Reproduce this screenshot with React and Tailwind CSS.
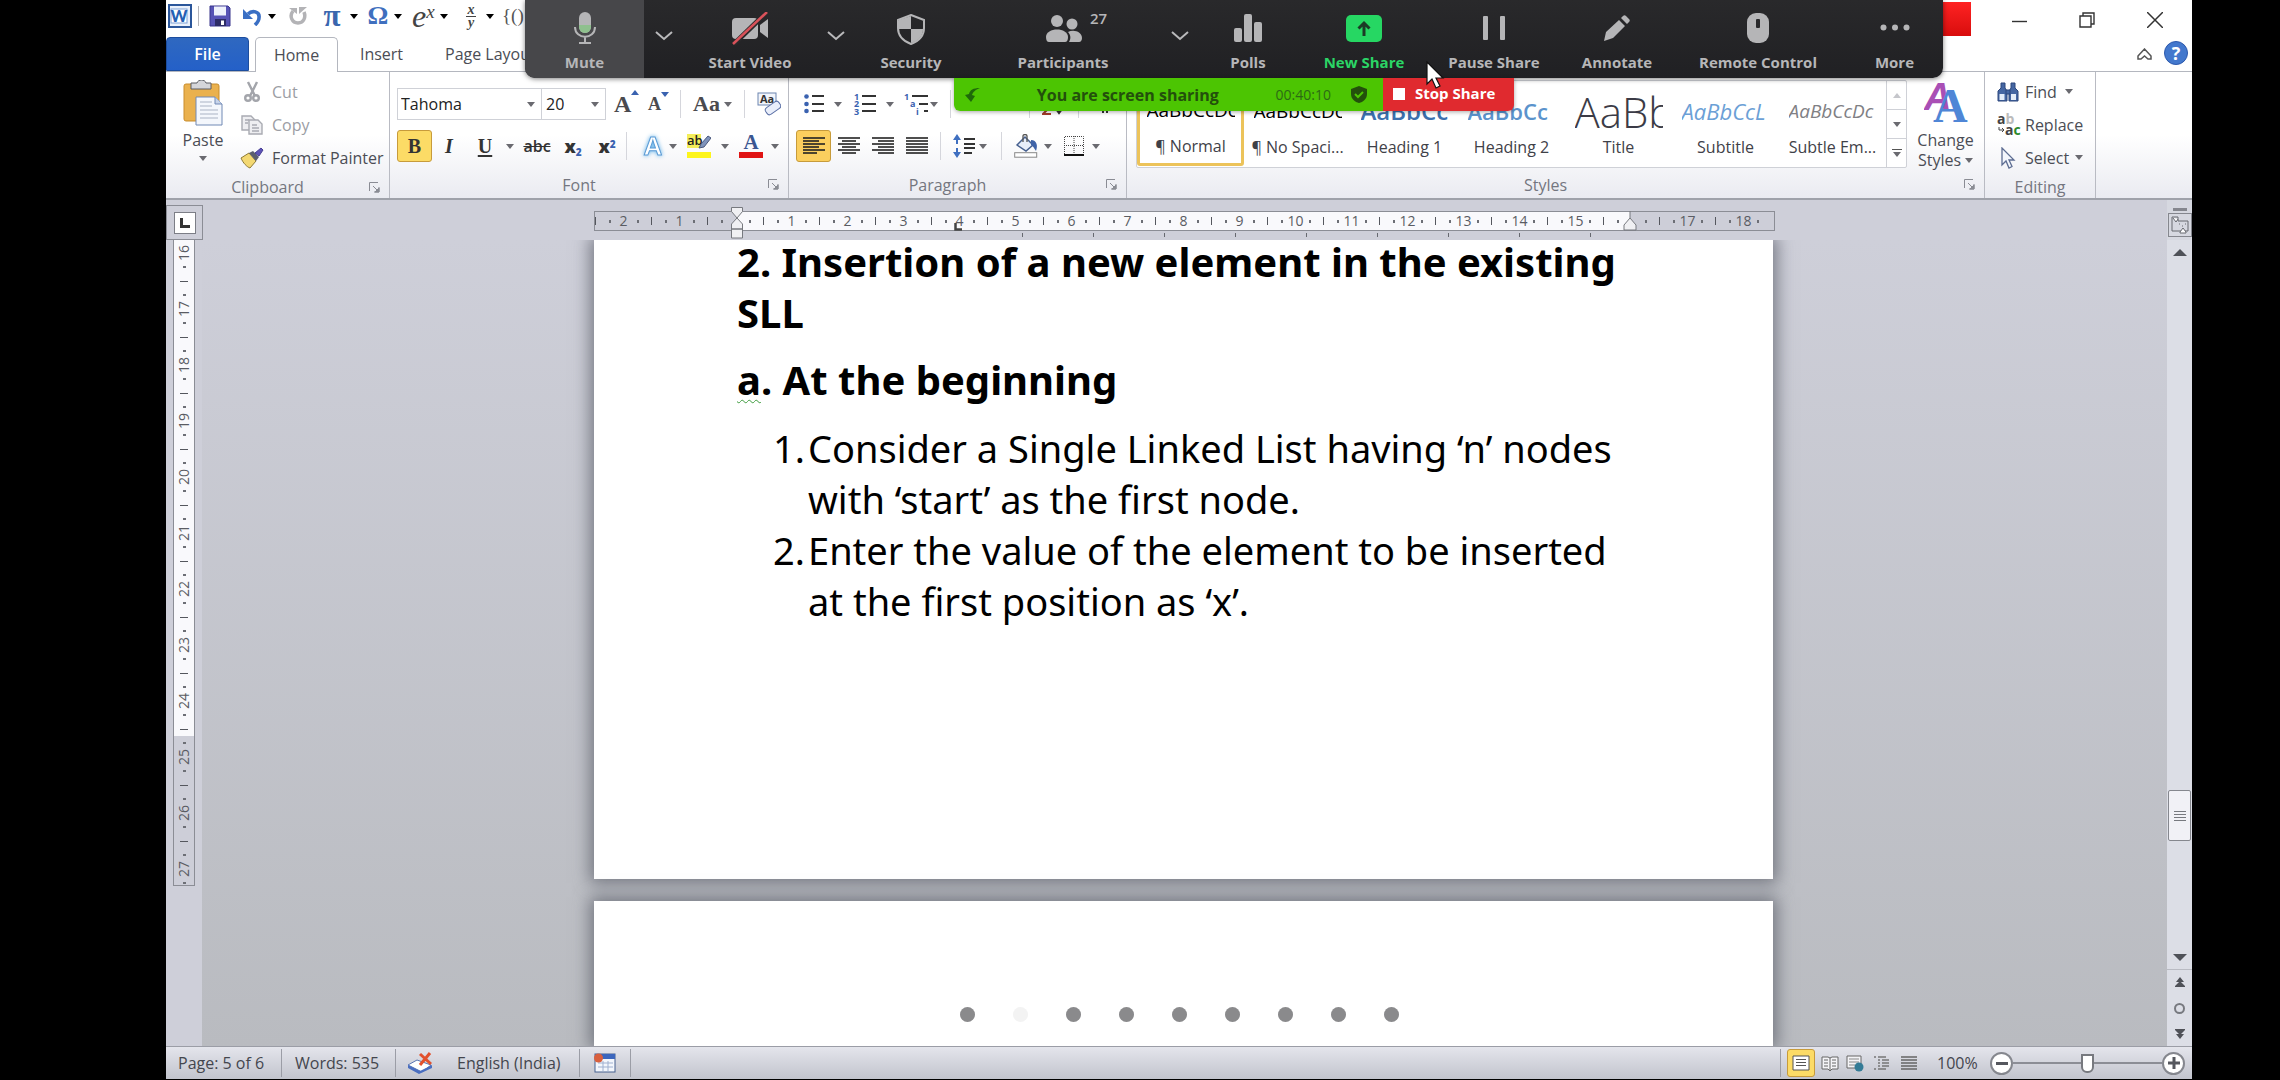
import React, { useState } from 'react';

const H_MARKS = ['2', '1', '', '1', '2', '3', '4', '5', '6', '7', '8', '9', '10', '11', '12', '13', '14', '15', '', '17', '18'];
const V_MARKS = ['16', '17', '18', '19', '20', '21', '22', '23', '24', '25', '26', '27'];

const STYLES = [
  { name: '¶ Normal', sample: 'AaBbCcDc', look: 'text-[19px] text-black' },
  { name: '¶ No Spaci...', sample: 'AaBbCcDc', look: 'text-[19px] text-black' },
  { name: 'Heading 1', sample: 'AaBbCc', look: 'text-[24px] font-semibold text-[#3c70ae]' },
  { name: 'Heading 2', sample: 'AaBbCc', look: 'text-[22px] font-semibold text-[#5b93cc]' },
  { name: 'Title', sample: 'AaBb', look: 'text-[42px] font-light text-[#3b3b46]' },
  { name: 'Subtitle', sample: 'AaBbCcL', look: 'text-[22px] italic text-[#6ba0d6]' },
  { name: 'Subtle Em...', sample: 'AaBbCcDc', look: 'text-[19px] italic text-[#808084]' },
];

function Caret({ className = 'text-[#6a6a70]' }) {
  return (
    <svg className={`w-2 h-[5px] shrink-0 ${className}`} viewBox="0 0 8 5" fill="currentColor">
      <path d="M0 0h8L4 5z" />
    </svg>
  );
}

function Sep() {
  return <div className="w-px h-7 shrink-0 bg-[#d5d6dc]"></div>;
}

// Ribbon group with its caption and optional dialog launcher
function Group({ title, launcher = true, className, children }) {
  return (
    <section className={`flex flex-col shrink-0 border-r border-[#b9bbc3] ${className}`}>
      <div className="flex-1">{children}</div>
      <div className="h-[25px] pb-0.5 flex items-center text-[16px] leading-5 text-[#74767f]">
        <span className="flex-1 text-center">{title}</span>
        {launcher && (
          <button aria-label={`${title} settings`} className="w-5">
            <svg className="w-[11px] h-[11px]" viewBox="0 0 11 11" fill="none" stroke="#8a8c94">
              <path d="M.5 9V.5H9M4 4l5 5M10 5v5H5" />
              <path d="M10 6v4H6z" fill="#8a8c94" />
            </svg>
          </button>
        )}
      </div>
    </section>
  );
}

function Lines({ rows, className = '' }) {
  return (
    <svg className={`w-[22px] h-[18px] ${className}`} viewBox="0 0 22 18" stroke="#222" strokeWidth="2">
      {rows.map(([a, b], i) => <path key={i} d={`M${a} ${1 + i * 3}H${b}`} strokeWidth="1.6" />)}
    </svg>
  );
}

function QuickAccess() {
  return (
    <div className="h-9 flex items-center pl-0.5 pb-1">
      <svg className="w-6 h-6" viewBox="0 0 24 24">
        <rect x="1" y="1" width="22" height="22" fill="#e9f0fb" stroke="#2b569a" strokeWidth="2" />
        <rect x="3" y="5" width="16" height="14" fill="#fff" stroke="#7ea2d8" />
        <text x="11" y="18" textAnchor="middle" fontSize="16" fontWeight="900" fill="#2460b4" fontFamily="Lato">W</text>
      </svg>
      <div className="w-px h-5 bg-[#b5b5ba] ml-1.5 mr-2.5"></div>
      <button aria-label="Save">
        <svg className="w-[22px] h-[22px]" viewBox="0 0 22 22">
          <path d="M1 1h18l2 2v18H1z" fill="#5753b5" stroke="#38358b" />
          <rect x="5" y="1.500" width="12" height="9" fill="#eef1fb" />
          <rect x="6" y="14" width="11" height="7" fill="#2d2c66" />
          <rect x="12" y="15.500" width="3" height="4.500" fill="#fff" />
        </svg>
      </button>
      <button aria-label="Undo" className="ml-3">
        <svg className="w-[19px] h-[19px]" viewBox="0 0 19 19">
          <path d="M5 7c4-4 12-3 11 4 0 3-2 5-4 7" fill="none" stroke="#3a6fc4" strokeWidth="3.600" />
          <path d="M0 2v10h10z" fill="#3a6fc4" />
        </svg>
      </button>
      <Caret className="ml-1.5 text-black" />
      <button aria-label="Repeat" className="ml-3">
        <svg className="w-5 h-5" viewBox="0 0 20 20">
          <path d="M5 5c-4 5-1 12 5 12s8-6 6-11" fill="none" stroke="#b3b3b6" strokeWidth="3.500" />
          <path d="M11 8V1h8zM1 2h8v6z" fill="#b3b3b6" />
        </svg>
      </button>
      <button aria-label="Pi" className="ml-3 w-6 text-center text-[31px] leading-6 font-bold text-[#3a66ae] font-['Liberation_Serif',serif]">π</button>
      <Caret className="ml-1.5 text-black" />
      <button aria-label="Symbol" className="ml-2 w-6 text-center text-[26px] leading-6 font-bold text-[#3f6fbe] font-['Liberation_Serif',serif]">Ω</button>
      <Caret className="ml-1 text-black" />
      <button aria-label="Script" className="ml-2.5 w-7 text-left text-[32px] leading-6 italic text-[#444] whitespace-nowrap font-['Liberation_Serif',serif]">
        e<sup className="text-[19px]">x</sup>
      </button>
      <Caret className="text-black" />
      <button aria-label="Fraction" className="ml-[18px] w-2.5 text-[14px] leading-[11px] font-bold italic text-[#444] font-['Liberation_Serif',serif]">
        <span className="block border-b border-[#444] pb-px">x</span>
        <span className="block">y</span>
      </button>
      <Caret className="ml-2.5 text-black" />
      <button aria-label="Brackets" className="ml-2 text-[19px] text-[#555] font-['Liberation_Serif',serif]">{'{()}'}</button>

      <div className="ml-auto flex items-center self-stretch">
        <div className="w-8 h-[34px] self-start mt-0.5 mr-[41px] bg-linear-to-b from-[#ff2222] to-[#d80c0c]"></div>
        <button aria-label="Minimize" className="w-4 h-5 mt-2 mr-[51px]">
          <svg className="w-4 h-4" viewBox="0 0 16 16" stroke="#333"><path d="M0 9.500h15" strokeWidth="1.400" /></svg>
        </button>
        <button aria-label="Restore" className="w-4 mt-2 mr-[52px]">
          <svg className="w-4 h-4" viewBox="0 0 16 16" fill="none" stroke="#333" strokeWidth="1.400"><path d="M1 4h11v11H1zM4 4V1h11v11h-3" /></svg>
        </button>
        <button aria-label="Close" className="w-4 mt-2 mr-[29px]">
          <svg className="w-4 h-4" viewBox="0 0 16 16" stroke="#333" strokeWidth="1.500"><path d="M0 0l16 16M16 0L0 16" /></svg>
        </button>
      </div>
    </div>
  );
}

function Tabs() {
  return (
    <nav className="h-9 flex items-end border-b border-[#b4b7bf] text-[16px] text-[#4b4d55]">
      <button className="w-[83px] h-[34px] mr-1.5 rounded-t bg-linear-to-b from-[#2f68c0] to-[#2460c8] border border-[#1c4d9e] font-semibold text-white">File</button>
      <button className="w-[83px] h-[35px] -mb-px rounded-t-[5px] border border-b-0 border-[#b4b7bf] bg-white">Home</button>
      <button className="w-[87px] h-[34px]">Insert</button>
      <button className="h-[34px] pl-5">Page Layout</button>
      <button aria-label="Minimize the ribbon" className="ml-auto mb-2.5 mr-3">
        <svg className="w-[15px] h-[13px]" viewBox="0 0 15 13" fill="none" stroke="#555" strokeWidth="1.500">
          <path d="M1 8l6.500-7L14 8v3h-3L7.500 8 4 11H1z" />
        </svg>
      </button>
      <button aria-label="Help" className="w-6 h-6 mb-1.5 mr-1 rounded-full border border-[#2d59ad] bg-[#4378cd] text-[18px] leading-5 font-bold text-white">?</button>
    </nav>
  );
}

function ClipboardGroup() {
  return (
    <Group title="Clipboard" className="w-[224px]">
      <div className="flex pt-1.5">
        <button className="w-[74px] flex flex-col items-center pt-0.5 text-[16px] leading-5 text-[#4b4d55]">
          <svg className="w-10 h-[46px] mb-1" viewBox="0 0 40 46">
            <rect x="1" y="4" width="35" height="37" rx="2" fill="#eab14e" stroke="#c98d2c" />
            <path d="M8 3h6c1-4 8-4 9 0h5v6H8z" fill="#d5d6da" stroke="#5a5c63" />
            <path d="M13 17h19l7 7v21H13z" fill="#f4f7fc" stroke="#7089b5" />
            <path d="M32 17v7h7" fill="#c7d4ea" stroke="#7089b5" />
            <path d="M17 22h12M17 26h12M17 30h18M17 34h18M17 38h18" stroke="#aab3c4" />
          </svg>
          Paste
          <Caret className="mt-1.5 text-[#6a6a70]" />
        </button>
        <div className="flex flex-col text-[16px] text-[#4b4d55] whitespace-nowrap">
          <button className="h-[33px] pb-1.5 flex items-center gap-2 text-[#9b9da4]">
            <svg className="w-6 h-[22px]" viewBox="0 0 24 22" fill="none" stroke="#a3a5ab" strokeWidth="2.400">
              <path d="M8 1l7 14M17 1l-7 14" />
              <circle cx="8" cy="17" r="2.800" /><circle cx="16" cy="17" r="2.800" />
            </svg>
            Cut
          </button>
          <button className="h-[33px] pb-1.5 flex items-center gap-2 text-[#9b9da4]">
            <svg className="w-6 h-[22px]" viewBox="0 0 24 22" fill="#eeeeF1" stroke="#a9abb2" strokeWidth="1.400">
              <path d="M2 2h9l4 4v10H2z" /><path d="M9 6h9l4 4v10H9z" />
              <path d="M5 6h4M5 9h3M12 11h5M12 14h7M12 17h7" />
            </svg>
            Copy
          </button>
          <button className="h-[33px] pb-1.5 flex items-center gap-2">
            <svg className="w-6 h-[22px]" viewBox="0 0 24 22">
              <path d="M1 11l8-5 7 8-6 7c-3-1-7-5-9-10z" fill="#f3d872" stroke="#8d7a35" />
              <path d="M9 6l4-2 6 6-3 4z" fill="#5b5e70" />
              <path d="M15 6l6-5 2 2-4 6z" fill="#5d53b7" stroke="#463d93" />
            </svg>
            Format Painter
          </button>
        </div>
      </div>
    </Group>
  );
}

function FontGroup() {
  const [bold, setBold] = useState(true);
  return (
    <Group title="Font" className="w-[399px]">
      <div className="h-8 mt-4 pl-[7px] flex items-center text-[16px] text-[#222]">
        <div className="w-[145px] h-8 flex items-center border border-[#cfd1d7] bg-white pl-[3px] pr-1.5">
          <select aria-label="Font" className="flex-1 appearance-none outline-none"><option>Tahoma</option></select>
          <Caret />
        </div>
        <div className="w-[65px] h-8 -ml-px flex items-center border border-[#cfd1d7] bg-white pl-1 pr-1.5">
          <select aria-label="Font size" className="flex-1 appearance-none outline-none"><option>20</option></select>
          <Caret />
        </div>
        <button aria-label="Grow font" className="w-7 ml-2 flex items-start">
          <span className="text-[24px] leading-7 font-bold text-[#4a4a4e] font-['Liberation_Serif',serif]">A</span>
          <svg className="w-2 h-2" viewBox="0 0 8 8" fill="#3a62b0"><path d="M0 5l4-5 4 5z" /></svg>
        </button>
        <button aria-label="Shrink font" className="w-6 ml-1.5 flex items-start">
          <span className="text-[18px] leading-8 font-bold text-[#4a4a4e] font-['Liberation_Serif',serif]">A</span>
          <svg className="w-2 h-2 mt-1" viewBox="0 0 8 8" fill="#3a62b0"><path d="M0 0h8L4 5z" /></svg>
        </button>
        <div className="w-2"></div>
        <Sep />
        <button aria-label="Change case" className="ml-3 flex items-center gap-1 text-[22px] leading-7 font-bold text-[#4a4a4e] font-['Liberation_Serif',serif]">Aa<Caret /></button>
        <div className="w-3"></div>
        <Sep />
        <button aria-label="Clear formatting" className="ml-3">
          <svg className="w-6 h-6" viewBox="0 0 24 24">
            <rect x="1" y="1" width="18" height="12" fill="#f2f5fb" stroke="#6d85b0" />
            <text x="10" y="11" textAnchor="middle" fontSize="11" fontWeight="700" fill="#333">Aa</text>
            <rect x="8" y="12" width="16" height="8" rx="3" fill="#e9eefa" stroke="#5a6fa5" transform="rotate(-35 16 16)" />
          </svg>
        </button>
      </div>
      <div className="h-8 mt-2.5 pl-[7px] flex items-center text-[#333]">
        <button
          aria-pressed={bold}
          onClick={() => setBold(!bold)}
          className={`w-[35px] h-8 rounded-[3px] text-[20px] font-bold font-['Liberation_Serif',serif] ${bold ? 'border border-[#c79b3b] bg-[#fcdb66]' : ''}`}
        >
          B
        </button>
        <button className="w-[34px] text-[20px] font-bold italic font-['Liberation_Serif',serif]">I</button>
        <button className="w-[38px] text-[20px] font-bold underline underline-offset-2 font-['Liberation_Serif',serif]">U</button>
        <Caret className="mx-0.5 text-[#6a6a70]" />
        <button className="w-[42px] text-[16px] font-semibold line-through">abc</button>
        <button className="w-[30px] text-[18px] font-extrabold leading-6">x<sub className="text-[10px] text-[#3a62b0]">2</sub></button>
        <button className="w-[38px] text-[18px] font-extrabold leading-6">x<sup className="text-[10px] text-[#3a62b0]">2</sup></button>
        <Sep />
        <button aria-label="Text effects" className="w-6 ml-3.5 text-[26px] leading-7 font-bold text-white font-['Liberation_Sans',sans-serif] [-webkit-text-stroke:1px_#5b9bd5] drop-shadow-[0_0_2px_#5fb0e8]">A</button>
        <Caret className="ml-1 text-[#6a6a70]" />
        <button aria-label="Highlight" className="ml-2.5">
          <svg className="w-6 h-[26px]" viewBox="0 0 24 26">
            <rect x="0" y="1" width="14" height="14" fill="#f4ee5a" />
            <text x="0" y="12" fontSize="13" fontWeight="600" fill="#222">ab</text>
            <path d="M12 15l2-4 7-8 3 2-7 9z" fill="#7f93bb" stroke="#49587c" />
            <rect x="0" y="19" width="24" height="6" fill="#fdf51c" />
          </svg>
        </button>
        <Caret className="ml-2.5 text-[#6a6a70]" />
        <button aria-label="Font color" className="ml-2.5">
          <svg className="w-6 h-[26px]" viewBox="0 0 24 26">
            <text x="12" y="16" textAnchor="middle" fontSize="21" fontWeight="700" fill="#3b5691" fontFamily="Liberation Serif">A</text>
            <rect x="0" y="19" width="24" height="6" fill="#e01414" />
          </svg>
        </button>
        <Caret className="ml-2 text-[#6a6a70]" />
      </div>
    </Group>
  );
}

function ParagraphGroup() {
  return (
    <Group title="Paragraph" className="w-[338px]">
      <div className="h-8 mt-4 pl-[15px] flex items-center">
        <button aria-label="Bullets">
          <svg className="w-5 h-5" viewBox="0 0 20 20" stroke="#333" strokeWidth="2">
            <path d="M8 2h12M8 10h12M8 17h12" />
            <g fill="#3a62b0" stroke="none"><circle cx="2.500" cy="2.500" r="2.300" /><circle cx="2.500" cy="10" r="2.300" /><circle cx="2.500" cy="17" r="2.300" /></g>
          </svg>
        </button>
        <Caret className="ml-2.5 text-[#6a6a70]" />
        <button aria-label="Numbering" className="ml-3">
          <svg className="w-[22px] h-[22px]" viewBox="0 0 22 22" stroke="#333" strokeWidth="2">
            <path d="M8 3h14M8 11h14M8 18h14" />
            <g fill="#3a62b0" stroke="none" fontSize="9" fontWeight="700"><text x="0" y="7">1</text><text x="0" y="14">2</text><text x="0" y="22">3</text></g>
          </svg>
        </button>
        <Caret className="ml-2.5 text-[#6a6a70]" />
        <button aria-label="Multilevel list" className="ml-2.5">
          <svg className="w-6 h-[22px]" viewBox="0 0 24 22" stroke="#333" strokeWidth="2">
            <path d="M8 3h16M15 11h9M20 18h4" />
            <g fill="#3a62b0" stroke="none" fontSize="9" fontWeight="700"><text x="0" y="7">1</text><text x="6" y="14">a</text><text x="12" y="22">i</text></g>
          </svg>
        </button>
        <Caret className="ml-0.5 text-[#6a6a70]" />
        <div className="w-3"></div>
        <Sep />
        <button aria-label="Decrease indent" className="ml-3"><Lines rows={[[0, 22], [10, 22], [10, 22], [10, 22], [0, 22]]} /></button>
        <button aria-label="Increase indent" className="ml-2.5 mr-3"><Lines rows={[[0, 22], [10, 22], [10, 22], [10, 22], [0, 22]]} /></button>
        <Sep />
        <button aria-label="Sort" className="ml-3">
          <svg className="w-6 h-6" viewBox="0 0 24 24">
            <path d="M1 10L5 1l4 9M2 7h6" fill="none" stroke="#3a62b0" strokeWidth="2" />
            <path d="M1 14h8l-8 8h8" fill="none" stroke="#a23b2a" strokeWidth="2" />
            <path d="M17 2v17M14 17l3 4 3-4z" stroke="#333" strokeWidth="2" />
          </svg>
        </button>
        <div className="w-3"></div>
        <Sep />
        <button aria-label="Show paragraph marks" className="ml-4">
          <svg className="w-3.5 h-[18px]" viewBox="0 0 14 18" fill="#333"><path d="M13 0v18h-2V2H9v16H7v-9a4.500 4.500 0 010-9z" /></svg>
        </button>
      </div>
      <div className="h-8 mt-2.5 pl-[7px] flex items-center">
        <button aria-label="Align left" className="w-[35px] h-8 flex items-center justify-center rounded-[3px] border border-[#c79b3b] bg-[#fbcf5e]">
          <Lines rows={[[0, 22], [0, 16], [0, 22], [0, 16], [0, 22], [0, 14]]} />
        </button>
        <button aria-label="Center" className="ml-[7px]"><Lines rows={[[0, 22], [4, 18], [0, 22], [4, 18], [0, 22], [4, 18]]} /></button>
        <button aria-label="Align right" className="ml-3"><Lines rows={[[0, 22], [6, 22], [0, 22], [6, 22], [0, 22], [6, 22]]} /></button>
        <button aria-label="Justify" className="ml-3 mr-3"><Lines rows={[[0, 22], [0, 22], [0, 22], [0, 22], [0, 22], [0, 22]]} /></button>
        <Sep />
        <button aria-label="Line spacing" className="ml-3">
          <svg className="w-[22px] h-6" viewBox="0 0 22 24">
            <path d="M4 4v6M4 14v6" stroke="#3f6fc0" strokeWidth="2" />
            <path d="M0 6l4-6 4 6zM0 18l4 6 4-6z" fill="#3f6fc0" />
            <path d="M11 5h11M11 10h11M11 14h11M11 19h8" stroke="#333" strokeWidth="2" />
          </svg>
        </button>
        <Caret className="ml-1 mr-3.5 text-[#6a6a70]" />
        <Sep />
        <button aria-label="Shading" className="ml-3">
          <svg className="w-6 h-6" viewBox="0 0 24 24">
            <path d="M3 11l8-8 8 8-7 6z" fill="#e8eef9" stroke="#46608f" strokeWidth="1.500" />
            <path d="M9 8V2c0-2 4-2 4 0v6" fill="none" stroke="#555" strokeWidth="1.300" />
            <path d="M17 6c6 0 7 6 5 11-2-3-3-5-5-6z" fill="#3f63a8" />
            <rect x=".7" y="18.700" width="22" height="4.500" fill="#fff" stroke="#888" />
          </svg>
        </button>
        <Caret className="ml-1.5 text-[#6a6a70]" />
        <button aria-label="Borders" className="ml-3">
          <svg className="w-5 h-5" viewBox="0 0 20 20" stroke="#444">
            <path d="M.5 18V.5h19V18M10 0v18M0 9.500h20" fill="none" strokeDasharray="1 1" />
            <path d="M0 19h20" stroke="#111" strokeWidth="2" />
          </svg>
        </button>
        <Caret className="ml-2 text-[#6a6a70]" />
      </div>
    </Group>
  );
}

function StylesGroup() {
  const [current, setCurrent] = useState('¶ Normal');
  return (
    <Group title="Styles" className="w-[858px]">
      <div className="flex pt-2 pl-[9px]">
        <div className="flex h-[88px] border border-[#cfd1d7] bg-white rounded-[2px]">
          {STYLES.map((s) => (
            <button
              key={s.name}
              onClick={() => setCurrent(s.name)}
              className={`w-[107px] flex flex-col items-center text-[16px] text-[#3f4148] ${current === s.name ? 'rounded-[3px] border-3 border-[#ecc35a] -mt-px h-[86px]' : 'p-[3px]'}`}
            >
              <span className={`w-[88px] h-[51px] pt-[3px] flex items-center justify-start overflow-hidden whitespace-nowrap ${s.look}`}>{s.sample}</span>
              <span className="leading-6 whitespace-nowrap">{s.name}</span>
            </button>
          ))}
          <div className="w-5 flex flex-col border-l border-[#cfd1d7]">
            <button aria-label="Previous styles" className="flex-1 flex items-center justify-center"><Caret className="rotate-180 text-[#c5c6cb]" /></button>
            <button aria-label="Next styles" className="flex-1 flex items-center justify-center border-y border-[#cfd1d7]"><Caret /></button>
            <button aria-label="More styles" className="flex-1 flex flex-col items-center justify-center gap-0.5">
              <span className="w-2.5 h-px bg-[#555]"></span>
              <Caret />
            </button>
          </div>
        </div>
        <button className="flex-1 flex flex-col items-center text-[16px] leading-5 text-[#4b4d55]">
          <svg className="w-11 h-[44px] mb-1.5" viewBox="0 0 44 44" fontFamily="Liberation Serif" fontWeight="700">
            <text x="0" y="30" fontSize="38" fontFamily="Liberation Sans" fill="#a94fb5" fontStyle="italic">A</text>
            <text x="9" y="42" fontSize="48" fill="#4f86d6">A</text>
          </svg>
          Change
          <span className="flex items-center gap-1">Styles <Caret /></span>
        </button>
      </div>
    </Group>
  );
}

function EditingGroup() {
  return (
    <Group title="Editing" launcher={false} className="w-[111px]">
      <div className="pt-1.5 pl-3 flex flex-col text-[16px] text-[#4b4d55]">
        <button className="h-[33px] pb-1.5 flex items-center gap-1.5">
          <svg className="w-[22px] h-5" viewBox="0 0 22 20" fill="#4566a2" stroke="#2c477c">
            <path d="M4 1h4v5l2 3v10H1V9l3-3zM14 1h4v5l3 3v10h-9V9l2-3z" />
            <rect x="9" y="8" width="4" height="4" /><rect x="2.500" y="12" width="5" height="6" fill="#e4ecf8" stroke="none" /><rect x="14" y="12" width="5" height="6" fill="#e4ecf8" stroke="none" />
          </svg>
          Find <Caret className="ml-0.5 text-[#6a6a70]" />
        </button>
        <button className="h-[33px] pb-1.5 flex items-center gap-1.5">
          <svg className="w-6 h-6 -mr-0.5" viewBox="0 0 24 24" fontSize="14" fontWeight="700">
            <text x="0" y="11" fill="#444">a<tspan fill="#bbb">b</tspan></text>
            <text x="8" y="22" fill="#444">a<tspan fill="#2c8a2c">c</tspan></text>
            <path d="M2 14v3h5M5 15l2 2-2 2" fill="none" stroke="#444" />
          </svg>
          Replace
        </button>
        <button className="h-[33px] pb-1.5 flex items-center gap-1.5">
          <svg className="w-[22px] h-[22px]" viewBox="0 0 22 22" fill="#f3f6fc" stroke="#5d6d92" strokeWidth="1.300">
            <path d="M5 1v17l4-4 3 7 3-1.500-3-6.500h5z" />
          </svg>
          Select <Caret className="text-[#6a6a70]" />
        </button>
      </div>
    </Group>
  );
}

function HorizontalRuler() {
  return (
    <div className="w-[1181px] h-5 flex items-center overflow-hidden border border-[#8b8d95] text-[14px] leading-none text-[#5a5c63] bg-[linear-gradient(to_right,#cdced8_143px,#f9f9fc_143px,#f9f9fc_1035px,#cdced8_1035px)]">
      <div className="flex items-center -ml-1.5">
        {H_MARKS.map((m, i) => (
          <div key={i} className="w-14 shrink-0 flex items-center">
            <span className="w-3.5 flex justify-center"><i className="w-px h-2 bg-[#55575e]"></i></span>
            <span className="w-3.5 flex justify-center"><i className="w-0.5 h-[3px] bg-[#6d6f76]"></i></span>
            <span className="w-3.5 flex justify-center">{m}</span>
            <span className="w-3.5 flex justify-center"><i className="w-0.5 h-[3px] bg-[#6d6f76]"></i></span>
          </div>
        ))}
      </div>
    </div>
  );
}

function RulerRow() {
  return (
    <div className="h-10 shrink-0 flex bg-[#cecfd9]">
      <div className="w-[37px] h-[35px] mt-[5px] flex items-center justify-center border border-[#8b8d95]">
        <button aria-label="Left tab" className="w-[22px] h-[22px] flex items-center justify-center border border-[#7c7e86] bg-white">
          <svg className="w-2.5 h-2.5" viewBox="0 0 10 10"><path d="M1.500 0v8.500H10" fill="none" stroke="#333" strokeWidth="3" /></svg>
        </button>
      </div>
      <div className="flex-1 flex justify-center pr-0.5">
        <div className="relative pt-[11px]">
          <HorizontalRuler />
          {/* Indent markers and tab stops sit over the scale */}
          <svg className="absolute left-[137px] top-[7px] w-3 h-8" viewBox="0 0 12 32" fill="#f0f0f3" stroke="#77797f">
            <path d="M.5.5h11v4L6 11 .5 4.500zM6 11l5.500 6v5H.500v-5zM.500 22h11v9H.500z" />
          </svg>
          <svg className="absolute left-[360px] top-[23px] w-2 h-2" viewBox="0 0 8 8"><path d="M1.500 0v6.500H8" fill="none" stroke="#444" strokeWidth="2.500" /></svg>
          <svg className="absolute left-[1029px] top-[11px] w-3.5 h-5" viewBox="0 0 14 20" fill="#f0f0f3" stroke="#77797f">
            <path d="M7 0v7l6 7v5H1v-5l6-7" />
          </svg>
          <div className="pl-[428px] flex gap-[70px] pt-0.5">
            {[1, 2, 3, 4, 5, 6, 7, 8, 9].map((n) => <i key={n} className="w-px h-1 bg-[#66686f]"></i>)}
          </div>
        </div>
      </div>
      <div className="w-[25px] flex flex-col items-center pt-2 bg-[#d6d8e0]">
        <div className="w-3.5 h-[3px] bg-[#85878e]"></div>
        <button aria-label="View ruler" className="mt-0.5 w-6 h-6 flex items-center justify-center border border-[#85878e] bg-[#d6d8e0]">
          <svg className="w-[18px] h-[18px]" viewBox="0 0 18 18" fill="none" stroke="#66686f">
            <path d="M1 1h6v4h10v10H1z" /><path d="M2 2l3 4 2-3M9 16l3-4 3 4v1H9z" fill="#fff" /><path d="M8 8h1M11 10h1M14 8h1" />
          </svg>
        </button>
      </div>
    </div>
  );
}

function VerticalRuler() {
  return (
    <div className="w-9 shrink-0 bg-[#cecfd9]">
      <div className="ml-[7px] w-[22px] h-[646px] pt-1.5 overflow-hidden border border-t-0 border-[#8b8d95] text-[14px] leading-none text-[#5a5c63] bg-[linear-gradient(to_bottom,#f9f9fc_496px,#cdced8_496px)]">
        {V_MARKS.map((m) => (
          <div key={m} className="h-14 flex flex-col items-center">
            <span className="h-3.5 flex items-center -rotate-90">{m}</span>
            <span className="h-3.5 flex items-center"><i className="w-[3px] h-0.5 bg-[#6d6f76]"></i></span>
            <span className="h-3.5 flex items-center"><i className="w-2 h-px bg-[#55575e]"></i></span>
            <span className="h-3.5 flex items-center"><i className="w-[3px] h-0.5 bg-[#6d6f76]"></i></span>
          </div>
        ))}
      </div>
    </div>
  );
}

function Document() {
  return (
    <main className="flex-1 min-w-0 flex flex-col items-center gap-[22px] pr-0.5 overflow-hidden bg-linear-to-b from-[#cecfd9] to-[#b9bbc0]">
      <article className="w-[1179px] px-[143px] pb-[252px] bg-white shadow-[0_0_16px_4px_rgba(90,94,104,0.75)] text-[38px] leading-[51px] text-black font-['Noto_Sans',sans-serif]">
        <h2 className="-mt-1 mb-4 text-[40px] font-bold whitespace-nowrap">2. Insertion of a new element in the existing<br />SLL</h2>
        <h3 className="mb-[18px] text-[40px] font-bold">
          <span className="underline decoration-wavy decoration-1 decoration-[#3f9c3f] underline-offset-4">a</span>. At the beginning
        </h3>
        <ol className="pl-9">
          <li className="flex whitespace-nowrap"><span className="w-[35px]">1.</span><p>Consider a Single Linked List having ‘n’ nodes<br />with ‘start’ as the first node.</p></li>
          <li className="flex whitespace-nowrap"><span className="w-[35px]">2.</span><p>Enter the value of the element to be inserted<br />at the first position as ‘x’.</p></li>
        </ol>
      </article>
      <article className="w-[1179px] flex-1 bg-white shadow-[0_0_16px_4px_rgba(90,94,104,0.75)]"></article>
    </main>
  );
}

function Scrollbar() {
  return (
    <div className="w-[25px] shrink-0 flex flex-col items-center bg-[#dcdee6] text-[#4f5158]">
      <button aria-label="Scroll up" className="h-6 flex items-center">
        <svg className="w-3.5 h-[7px]" viewBox="0 0 14 7" fill="currentColor"><path d="M0 7h14L7 0z" /></svg>
      </button>
      <div className="w-full h-[526px] shrink-0"></div>
      <div className="w-[23px] h-[51px] shrink-0 flex flex-col items-center justify-center gap-0.5 border border-[#85878e] rounded-[2px] bg-[#f1f1f6]">
        <i className="w-3 h-px bg-[#77797f]"></i><i className="w-3 h-px bg-[#77797f]"></i><i className="w-3 h-px bg-[#77797f]"></i><i className="w-3 h-px bg-[#77797f]"></i>
      </div>
      <div className="flex-1"></div>
      <button aria-label="Scroll down" className="h-6 flex items-center">
        <svg className="w-3.5 h-[7px]" viewBox="0 0 14 7" fill="currentColor"><path d="M0 0h14L7 7z" /></svg>
      </button>
      <div className="w-full flex flex-col items-center border-t border-[#b9bbc3]">
        <button aria-label="Previous page" className="h-6 flex items-center">
          <svg className="w-2.5 h-2.5" viewBox="0 0 10 10" fill="currentColor"><path d="M1 5l4-5 4 5zM0 9l5-5 5 5v1H0z" /></svg>
        </button>
        <button aria-label="Select browse object" className="h-7 flex items-center"><i className="w-[11px] h-[11px] rounded-full border-2 border-[#77797f]"></i></button>
        <button aria-label="Next page" className="h-6 flex items-center">
          <svg className="w-2.5 h-2.5" viewBox="0 0 10 10" fill="currentColor"><path d="M0 0h10v1L5 6 0 1zM1 5h8l-4 5z" /></svg>
        </button>
      </div>
    </div>
  );
}

function StatusBar() {
  const [zoom, setZoom] = useState(50);
  const bar = 'w-px h-7 bg-[#9b9da6]';
  return (
    <footer className="h-[33px] shrink-0 flex items-center border-t border-[#9b9da6] bg-linear-to-b from-[#e4e5ec] to-[#c2c4cd] text-[16px] leading-5 text-[#44464e]">
      <span className="w-[115px] pl-3">Page: 5 of 6</span>
      <div className={bar}></div>
      <span className="w-[113px] pl-[13px]">Words: 535</span>
      <div className={bar}></div>
      <button aria-label="Proofing errors" className="ml-3">
        <svg className="w-[25px] h-[23px]" viewBox="0 0 25 23">
          <path d="M0 13l9-5 14 5-9 7z" fill="#fff" stroke="#5874b4" />
          <path d="M0 13l12 6 12-6v3l-13 6-11-6z" fill="#4a6ec0" />
          <path d="M12 2l11 10M22 1L12 13" stroke="#e2512d" strokeWidth="3" />
        </svg>
      </button>
      <span className="w-[146px] pl-6">English (India)</span>
      <div className={bar}></div>
      <button aria-label="Macros" className="mx-3.5">
        <svg className="w-[22px] h-5" viewBox="0 0 22 20">
          <rect x="1" y="1" width="20" height="18" fill="#f3f6fc" stroke="#46608f" />
          <rect x="1" y="1" width="20" height="5" fill="#3c66bd" />
          <path d="M4 10h15M4 14h15M9 8v10M14 8v10" stroke="#9fb0d0" />
          <circle cx="4.500" cy="5" r="4.500" fill="#d9603e" />
        </svg>
      </button>
      <div className={bar}></div>

      <div className={`ml-auto ${bar}`}></div>
      <button aria-label="Print layout" className="ml-1.5 w-7 h-7 flex items-center justify-center rounded-[3px] border border-[#c79b3b] bg-[#fcdb66]">
        <svg className="w-[18px] h-4" viewBox="0 0 18 16" stroke="#555"><path d="M1 1h16v14H1z" fill="#fff" /><path d="M4 4.500h10M4 7.500h10M4 10.500h10" /></svg>
      </button>
      <button aria-label="Full screen reading" className="ml-1.5">
        <svg className="w-[18px] h-[17px]" viewBox="0 0 18 17" fill="#f4f4f7" stroke="#666"><path d="M1 2h6l2 1 2-1h6v12h-6l-2 2-2-2H1zM9 3v12M3 5h4M3 8h4M3 11h4M11 5h4M11 8h4M11 11h4" /></svg>
      </button>
      <button aria-label="Web layout" className="ml-[7px]">
        <svg className="w-[18px] h-[17px]" viewBox="0 0 18 17"><path d="M1 1h14v12H1z" fill="#f4f4f7" stroke="#666" /><path d="M3 4h10M3 7h10M3 10h6" stroke="#888" /><circle cx="13" cy="12" r="4.500" fill="#347b96" /></svg>
      </button>
      <button aria-label="Outline" className="ml-2.5">
        <svg className="w-[15px] h-4" viewBox="0 0 15 16" stroke="#777" strokeWidth="1.500"><path d="M0 2h2M4 2h8M4 5h2M8 5h7M4 8h2M8 8h7M4 11h2M8 11h7M0 14h2M4 14h8" /></svg>
      </button>
      <button aria-label="Draft" className="ml-3">
        <svg className="w-4 h-4" viewBox="0 0 16 16" stroke="#666" strokeWidth="1.500"><path d="M0 2h16M0 5h16M0 8h16M0 11h16M0 14h16" /></svg>
      </button>
      <span className="ml-5 w-[53px]">100%</span>
      <button aria-label="Zoom out" className="w-[23px] h-[23px] flex items-center justify-center rounded-full border-2 border-[#85878e] bg-white"><i className="w-3 h-[3px] bg-[#55575e]"></i></button>
      <input
        type="range"
        aria-label="Zoom"
        value={zoom}
        onChange={(e) => setZoom(e.target.value)}
        className="w-[149px] h-5 appearance-none bg-[linear-gradient(to_bottom,transparent_9px,#8b8d95_9px,#8b8d95_11px,transparent_11px)] [&::-webkit-slider-thumb]:appearance-none [&::-webkit-slider-thumb]:w-[13px] [&::-webkit-slider-thumb]:h-[19px] [&::-webkit-slider-thumb]:bg-white [&::-webkit-slider-thumb]:border-2 [&::-webkit-slider-thumb]:border-[#77797f] [&::-webkit-slider-thumb]:rounded-b-[6px]"
      />
      <button aria-label="Zoom in" className="mr-[7px] w-[23px] h-[23px] flex items-center justify-center rounded-full border-2 border-[#85878e] bg-white">
        <svg className="w-3 h-3" viewBox="0 0 12 12" stroke="#55575e" strokeWidth="3"><path d="M0 6h12M6 0v12" /></svg>
      </button>
    </footer>
  );
}

function MeetingButton({ label, className = '', children }) {
  return (
    <button className={`h-full shrink-0 flex flex-col items-center pt-3 text-[15px] leading-5 font-bold ${className}`}>
      <span className="h-10 flex">{children}</span>
      {label}
    </button>
  );
}

function Chevron({ label }) {
  return (
    <button aria-label={label} className="w-10 shrink-0 flex justify-center pt-[31px]">
      <svg className="w-[18px] h-[10px]" viewBox="0 0 18 10" fill="none" stroke="#b9b9bb" strokeWidth="2"><path d="M1 1l8 7 8-7" /></svg>
    </button>
  );
}

// Floating meeting controls that hang from the top of the shared screen
function MeetingToolbar() {
  return (
    <div className="absolute left-[359px] top-0 w-[1418px]">
      <div className="h-[78px] flex items-start rounded-b-[10px] overflow-hidden bg-linear-to-b from-[#29292b] to-[#202023] text-[#b6b6b8] shadow-[0_1px_5px_rgba(0,0,0,0.5)]">
        <MeetingButton label="Mute" className="w-[119px] bg-[#47474a]">
          <svg className="w-[22px] h-8" viewBox="0 0 22 32">
            <rect x="5" y="0" width="12" height="21" rx="6" fill="#b5b5b7" />
            <path d="M5 13h12v2a6 6 0 01-12 0z" fill="#8fc08e" />
            <path d="M1 15c0 13 20 13 20 0M11 25v6M5 31h12" fill="none" stroke="#b5b5b7" strokeWidth="2" />
          </svg>
        </MeetingButton>
        <Chevron label="Audio options" />
        <MeetingButton label="Start Video" className="w-[132px]">
          <svg className="w-9 h-[34px]" viewBox="0 0 36 34">
            <rect x="0" y="6" width="26" height="21" rx="4" fill="#b5b5b7" />
            <path d="M28 13l8-6v19l-8-6z" fill="#b5b5b7" />
            <path d="M2 32L35 0" stroke="#29292b" strokeWidth="5" /><path d="M1 32L35 0" stroke="#d9525a" strokeWidth="2.500" />
          </svg>
        </MeetingButton>
        <Chevron label="Video options" />
        <MeetingButton label="Security" className="w-[110px]">
          <svg className="w-7 h-[31px] mt-0.5" viewBox="0 0 28 31">
            <path d="M14 1l13 5v8c0 8-5 13-13 16C6 27 1 22 1 14V6z" fill="none" stroke="#b5b5b7" strokeWidth="2" />
            <path d="M14 2v13H2V6zM14 15h12c0 7-5 12-12 14z" fill="#b5b5b7" />
          </svg>
        </MeetingButton>
        <MeetingButton label="Participants" className="w-[194px]">
          <span className="flex items-start pl-[38px]">
            <svg className="w-9 h-7 mt-[3px]" viewBox="0 0 36 28" fill="#b5b5b7">
              <circle cx="11" cy="6" r="6" /><path d="M0 22c0-10 22-10 22 0 0 3-1 5-3 5H3c-2 0-3-2-3-5z" />
              <circle cx="26" cy="9" r="5.500" /><path d="M22 17c6-3 14 0 14 6 0 2-1 4-3 4H23c2-3 2-7-1-10z" />
            </svg>
            <span className="w-9 pl-2 -mt-1 text-[15px] text-left font-semibold">27</span>
          </span>
        </MeetingButton>
        <Chevron label="Participant options" />
        <MeetingButton label="Polls" className="w-[96px]">
          <svg className="w-7 h-7 mt-0.5" viewBox="0 0 28 28" fill="#b5b5b7">
            <rect x="0" y="14" width="8" height="14" rx="2" /><rect x="10" y="0" width="8" height="28" rx="2" /><rect x="20" y="8" width="8" height="20" rx="2" />
          </svg>
        </MeetingButton>
        <MeetingButton label="New Share" className="w-[136px] text-[#2bd566]">
          <svg className="w-9 h-7 mt-[3px]" viewBox="0 0 36 28">
            <rect width="36" height="27" rx="5" fill="#26d763" />
            <path d="M18 21V8M12.500 13.500L18 8l5.500 5.500" fill="none" stroke="#1c3a26" strokeWidth="3" />
          </svg>
        </MeetingButton>
        <MeetingButton label="Pause Share" className="w-[124px]">
          <svg className="w-[22px] h-6 mt-1" viewBox="0 0 22 24" fill="#b5b5b7"><rect width="5" height="24" rx="1" /><rect x="17" width="5" height="24" rx="1" /></svg>
        </MeetingButton>
        <MeetingButton label="Annotate" className="w-[122px]">
          <svg className="w-[26px] h-[26px] mt-[3px]" viewBox="0 0 26 26" fill="#b5b5b7">
            <path d="M0 26l2-9L15 5l6 6L9 23zM17 3l2-2c1-1 2-1 3 0l3 3c1 1 1 2 0 3l-2 2z" />
          </svg>
        </MeetingButton>
        <MeetingButton label="Remote Control" className="w-[160px]">
          <svg className="w-[22px] h-[30px] mt-px" viewBox="0 0 22 30"><rect width="22" height="30" rx="9" fill="#b5b5b7" /><rect x="9" y="6" width="4" height="9" rx="1" fill="#29292b" /></svg>
        </MeetingButton>
        <MeetingButton label="More" className="flex-1 pl-2">
          <svg className="w-[30px] h-[7px] mt-3" viewBox="0 0 30 7" fill="#b5b5b7"><circle cx="3.500" cy="3.500" r="3" /><circle cx="15" cy="3.500" r="3" /><circle cx="26.500" cy="3.500" r="3" /></svg>
        </MeetingButton>
      </div>

      {/* Share status */}
      <div className="w-[560px] h-[33px] mx-auto flex rounded-b-md overflow-hidden text-[15px] shadow-[0_1px_4px_rgba(0,0,0,0.35)]">
        <div className="flex-1 flex items-center bg-[#4cc502] text-[#23500c]">
          <svg className="w-[15px] h-3.5 ml-[11px]" viewBox="0 0 15 14" fill="#1f6a0a"><path d="M15 0C8 0 5 2 4 6L0 7l6 7 4-6-3-1c1-3 3-5 8-7z" /></svg>
          <span className="flex-1 text-center text-[16px] font-bold">You are screen sharing</span>
          <span className="text-[14px] text-[#2c6a14]">00:40:10</span>
          <svg className="w-4 h-[17px] ml-5 mr-4" viewBox="0 0 16 17"><path d="M8 0l8 3v5c0 5-4 8-8 9-4-1-8-4-8-9V3z" fill="#23500c" /><path d="M4 8l3 3 5-5" fill="none" stroke="#4cc502" strokeWidth="2" /></svg>
        </div>
        <button className="w-[131px] flex items-center pb-0.5 pl-2.5 gap-2.5 bg-[#e02a2f] font-bold text-white">
          <i className="w-3 h-3 bg-white"></i>
          Stop Share
        </button>
      </div>

      <svg className="absolute left-[901px] top-[61px] w-[19px] h-7" viewBox="0 0 19 28" fill="#fff" stroke="#111" strokeWidth="1.200">
        <path d="M1 1v22l5-5 4 9 4-2-4-8h7z" />
      </svg>
    </div>
  );
}

function PageDots() {
  return (
    <div className="absolute inset-x-0 bottom-[57px] flex justify-center gap-[38px]">
      {[0, 1, 2, 3, 4, 5, 6, 7, 8].map((n) => (
        <i key={n} className={`w-[15px] h-[15px] rounded-full ${n === 1 ? 'bg-[#f3f3f3]' : 'bg-[#8a8a8c]'}`}></i>
      ))}
    </div>
  );
}

function App() {
  return (
    <div className="h-screen overflow-hidden bg-black pl-[166px] pr-[88px] pb-px font-['Open_Sans',sans-serif]">
      <div className="relative h-full flex flex-col overflow-hidden bg-white">
        <header className="shrink-0">
          <QuickAccess />
          <Tabs />
          <div className="h-32 flex border-b-2 border-[#9fa2aa] bg-linear-to-b from-white from-50% to-[#eaebf1]">
            <ClipboardGroup />
            <FontGroup />
            <ParagraphGroup />
            <StylesGroup />
            <EditingGroup />
          </div>
        </header>
        <RulerRow />
        <div className="flex-1 min-h-0 flex">
          <VerticalRuler />
          <Document />
          <Scrollbar />
        </div>
        <StatusBar />
        <MeetingToolbar />
        <PageDots />
      </div>
    </div>
  );
}

export default App;
